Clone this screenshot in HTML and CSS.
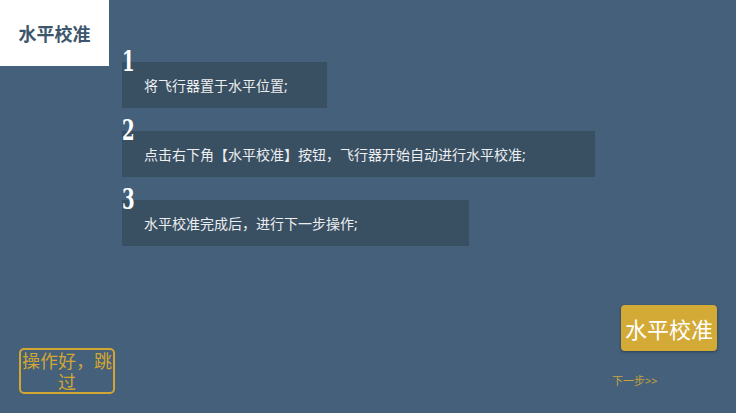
FILE: index.html
```html
<!DOCTYPE html>
<html lang="zh-CN">
<head>
<meta charset="utf-8">
<title>水平校准</title>
<link rel="stylesheet" href="styles.css">
</head>
<body>
<div class="screen">
  <div class="top">
    <div class="title">水平校准</div>
    <div class="steps">
      <div class="step">
        <div class="num">1</div>
        <div class="box box-1">将飞行器置于水平位置;</div>
      </div>
      <div class="step">
        <div class="num">2</div>
        <div class="box box-2">点击右下角【水平校准】按钮，飞行器开始自动进行水平校准;</div>
      </div>
      <div class="step">
        <div class="num">3</div>
        <div class="box box-3">水平校准完成后，进行下一步操作;</div>
      </div>
    </div>
  </div>
  <div class="bottom">
    <div class="skip">操作好，跳过</div>
    <div class="actions">
      <div class="calibrate">水平校准</div>
      <div class="next">下一步&gt;&gt;</div>
    </div>
  </div>
</div>
</body>
</html>
```
FILE: styles.css
```css
html, body {
  margin: 0;
  padding: 0;
}
body {
  background: #44607a;
  font-family: "Noto Sans", "Noto Sans CJK SC", sans-serif;
}
.screen {
  width: 736px;
  height: 413px;
  display: flex;
  flex-direction: column;
}
.top {
  display: flex;
  align-items: flex-start;
}
.title {
  width: 109px;
  height: 66px;
  background: #ffffff;
  color: #3d566c;
  font-size: 18px;
  font-weight: bold;
  display: flex;
  align-items: center;
  justify-content: center;
}
.steps {
  margin-left: 13px;
  padding-top: 62px;
  display: flex;
  flex-direction: column;
  align-items: flex-start;
  gap: 23px;
}
.step {
  display: flex;
  flex-direction: column;
  align-items: flex-start;
}
.num {
  position: relative;
  z-index: 1;
  height: 0;
  line-height: 0;
  font-family: "DejaVu Serif Condensed", "DejaVu Serif", serif;
  font-stretch: condensed;
  font-weight: bold;
  font-size: 28px;
  color: #ffffff;
  transform: scaleX(0.72);
  transform-origin: left center;
}
.box {
  height: 46px;
  box-sizing: border-box;
  padding-left: 22px;
  background: #394f62;
  color: #eceef0;
  font-size: 14px;
  display: flex;
  align-items: center;
}
.box-1 { width: 205px; }
.box-2 { width: 473px; }
.box-3 { width: 347px; }
.bottom {
  margin-top: auto;
  display: flex;
  justify-content: space-between;
  align-items: flex-end;
}
.skip {
  margin: 0 0 19px 19px;
  width: 96px;
  height: 46px;
  box-sizing: border-box;
  border: 2px solid #d2a633;
  border-radius: 5px;
  color: #d2a633;
  font-size: 18px;
  line-height: 21px;
  text-align: center;
  padding-top: 1px;
}
.actions {
  margin: 0 19px 25px 0;
  display: flex;
  flex-direction: column;
  align-items: flex-end;
}
.calibrate {
  margin-left: 9px;
  width: 96px;
  height: 46px;
  background: #d4aa36;
  border-radius: 4px;
  box-shadow: 0 1px 3px rgba(0, 0, 0, 0.35);
  color: #ffffff;
  font-size: 22px;
  display: flex;
  align-items: center;
  justify-content: center;
}
.next {
  align-self: flex-start;
  margin-top: 22px;
  font-size: 11px;
  line-height: 15px;
  color: #c9a33a;
}
```
